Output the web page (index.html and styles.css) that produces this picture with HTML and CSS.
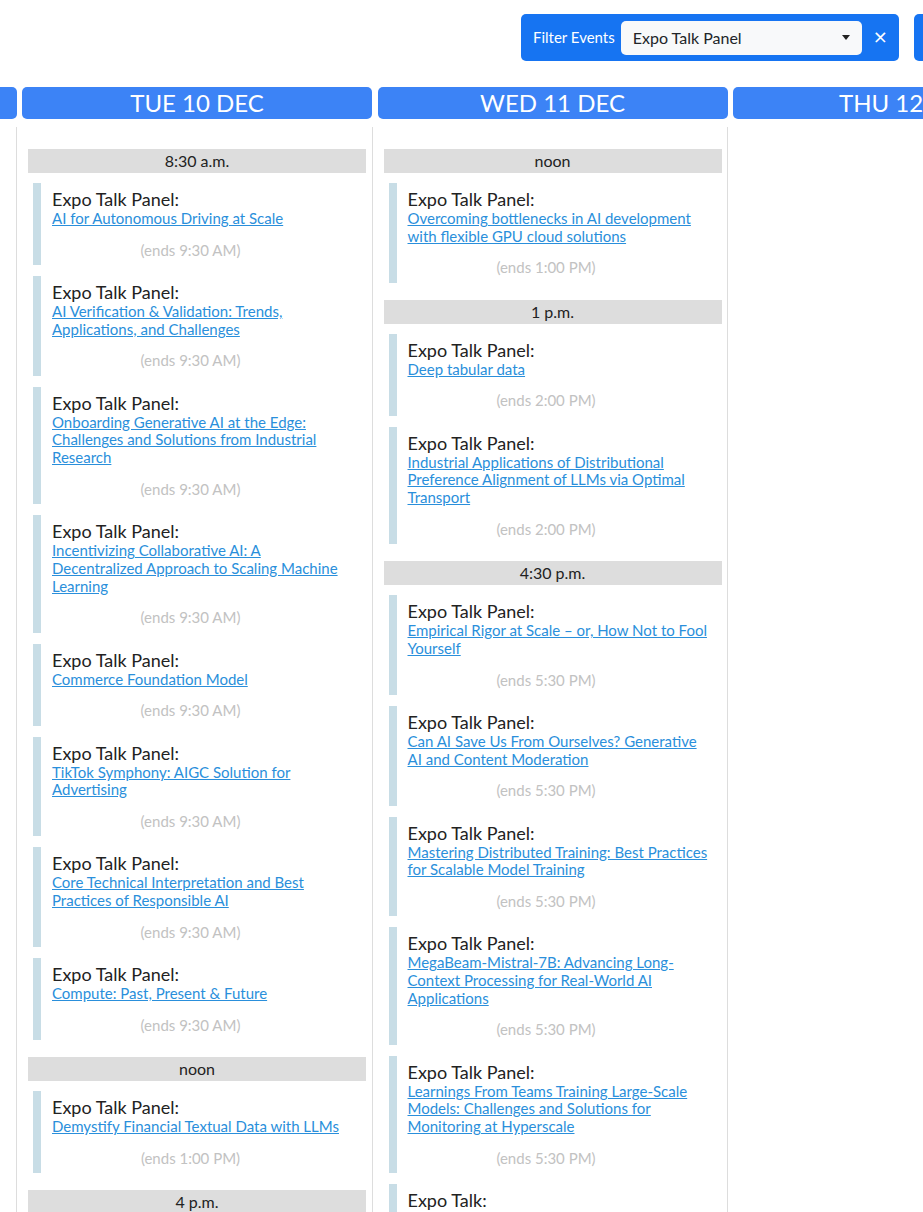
FILE: index.html
```html
<!doctype html>
<html lang="en">
<head>
  <meta charset="UTF-8" />
  <meta name="viewport" content="width=device-width, initial-scale=1.0" />
  <title>Expo Schedule</title>
  <link rel="stylesheet" href="styles.css">
</head>
<body>
  <div class="toolbar">
    <div class="filter">
      <label class="filter-label">Filter Events</label>
      <div class="select">
        <span>Expo Talk Panel</span>
        <span class="caret"></span>
      </div>
      <button class="clear">&times;</button>
    </div>
    <div class="filter filter-next"></div>
  </div>

  <div class="days">
    <div class="day">
      <div class="day-head"></div>
      <div class="day-body"></div>
    </div>

    <div class="day">
      <div class="day-head">TUE 10 DEC</div>
      <div class="day-body">
        <div class="slot">8:30 a.m.</div>
        <div class="event">
          <div class="event-type">Expo Talk Panel:</div>
          <a href="#">AI for Autonomous Driving at Scale</a>
          <div class="ends">(ends 9:30 AM)</div>
        </div>
        <div class="event">
          <div class="event-type">Expo Talk Panel:</div>
          <a href="#">AI Verification &amp; Validation: Trends,<br>Applications, and Challenges</a>
          <div class="ends">(ends 9:30 AM)</div>
        </div>
        <div class="event">
          <div class="event-type">Expo Talk Panel:</div>
          <a href="#">Onboarding Generative AI at the Edge:<br>Challenges and Solutions from Industrial<br>Research</a>
          <div class="ends">(ends 9:30 AM)</div>
        </div>
        <div class="event">
          <div class="event-type">Expo Talk Panel:</div>
          <a href="#">Incentivizing Collaborative AI: A<br>Decentralized Approach to Scaling Machine<br>Learning</a>
          <div class="ends">(ends 9:30 AM)</div>
        </div>
        <div class="event">
          <div class="event-type">Expo Talk Panel:</div>
          <a href="#">Commerce Foundation Model</a>
          <div class="ends">(ends 9:30 AM)</div>
        </div>
        <div class="event">
          <div class="event-type">Expo Talk Panel:</div>
          <a href="#">TikTok Symphony: AIGC Solution for<br>Advertising</a>
          <div class="ends">(ends 9:30 AM)</div>
        </div>
        <div class="event">
          <div class="event-type">Expo Talk Panel:</div>
          <a href="#">Core Technical Interpretation and Best<br>Practices of Responsible AI</a>
          <div class="ends">(ends 9:30 AM)</div>
        </div>
        <div class="event">
          <div class="event-type">Expo Talk Panel:</div>
          <a href="#">Compute: Past, Present &amp; Future</a>
          <div class="ends">(ends 9:30 AM)</div>
        </div>
        <div class="slot">noon</div>
        <div class="event">
          <div class="event-type">Expo Talk Panel:</div>
          <a href="#">Demystify Financial Textual Data with LLMs</a>
          <div class="ends">(ends 1:00 PM)</div>
        </div>
        <div class="slot">4 p.m.</div>
      </div>
    </div>

    <div class="day">
      <div class="day-head">WED 11 DEC</div>
      <div class="day-body">
        <div class="slot">noon</div>
        <div class="event">
          <div class="event-type">Expo Talk Panel:</div>
          <a href="#">Overcoming bottlenecks in AI development<br>with flexible GPU cloud solutions</a>
          <div class="ends">(ends 1:00 PM)</div>
        </div>
        <div class="slot">1 p.m.</div>
        <div class="event">
          <div class="event-type">Expo Talk Panel:</div>
          <a href="#">Deep tabular data</a>
          <div class="ends">(ends 2:00 PM)</div>
        </div>
        <div class="event">
          <div class="event-type">Expo Talk Panel:</div>
          <a href="#">Industrial Applications of Distributional<br>Preference Alignment of LLMs via Optimal<br>Transport</a>
          <div class="ends">(ends 2:00 PM)</div>
        </div>
        <div class="slot">4:30 p.m.</div>
        <div class="event">
          <div class="event-type">Expo Talk Panel:</div>
          <a href="#">Empirical Rigor at Scale – or, How Not to Fool<br>Yourself</a>
          <div class="ends">(ends 5:30 PM)</div>
        </div>
        <div class="event">
          <div class="event-type">Expo Talk Panel:</div>
          <a href="#">Can AI Save Us From Ourselves? Generative<br>AI and Content Moderation</a>
          <div class="ends">(ends 5:30 PM)</div>
        </div>
        <div class="event">
          <div class="event-type">Expo Talk Panel:</div>
          <a href="#">Mastering Distributed Training: Best Practices<br>for Scalable Model Training</a>
          <div class="ends">(ends 5:30 PM)</div>
        </div>
        <div class="event">
          <div class="event-type">Expo Talk Panel:</div>
          <a href="#">MegaBeam-Mistral-7B: Advancing Long-<br>Context Processing for Real-World AI<br>Applications</a>
          <div class="ends">(ends 5:30 PM)</div>
        </div>
        <div class="event">
          <div class="event-type">Expo Talk Panel:</div>
          <a href="#">Learnings From Teams Training Large-Scale<br>Models: Challenges and Solutions for<br>Monitoring at Hyperscale</a>
          <div class="ends">(ends 5:30 PM)</div>
        </div>
        <div class="event">
          <div class="event-type">Expo Talk:</div>
          <a href="#">&nbsp;</a>
          <div class="ends">&nbsp;</div>
        </div>
      </div>
    </div>

    <div class="day">
      <div class="day-head">THU 12 DEC</div>
      <div class="day-body"></div>
    </div>
  </div>
</body>
</html>
```

FILE: styles.css
```css
* { box-sizing: border-box; }
body {
  margin: 0;
  overflow: hidden;
  font-family: Lato, "Open Sans", sans-serif;
  color: #222;
  background: #fff;
}

/* filter bar */
.toolbar {
  display: flex;
  justify-content: flex-end;
  gap: 15px;
  margin: 14px -62px 0 0;
}
.filter {
  display: flex;
  align-items: center;
  height: 47px;
  width: 378px;
  padding: 0 7px 0 12px;
  background: #1674f2;
  border-radius: 5px;
}
.filter-next { width: 71px; }
.filter-label {
  color: #fff;
  font-size: 15px;
  margin-right: 6px;
  padding-bottom: 1px;
}
.select {
  display: flex;
  align-items: center;
  justify-content: space-between;
  width: 241px;
  height: 34px;
  padding: 0 12px;
  background: #f8f9fa;
  border-radius: 5px;
  font-size: 16px;
  color: #212529;
}
.caret {
  width: 0; height: 0;
  border-left: 4px solid transparent;
  border-right: 4px solid transparent;
  border-top: 5px solid #222;
}
.clear {
  flex: 1;
  border: 0;
  background: none;
  color: #fff;
  font-size: 18px;
  font-family: "DejaVu Sans", sans-serif;
  padding: 0 0 2px 7px;
  cursor: pointer;
}

/* day columns */
.days {
  display: flex;
  margin: 26px 0 0 -339.5px;
}
.day { flex: none; width: 355.5px; }
.day-head {
  width: 350px;
  height: 32px;
  margin-left: 6px;
  background: #3c83f6;
  border-radius: 5px;
  color: #fff;
  font-size: 24px;
  line-height: 32px;
  text-align: center;
  white-space: nowrap;
}
.day-body {
  margin-top: 8px;
  min-height: 1200px;
  border-left: 1px solid #ddd;
  padding: 22px 5.5px 0 11px;
}
.slot {
  height: 24px;
  margin: 17px 0 10px;
  background: #ddd;
  font-size: 16px;
  line-height: 24px;
  text-align: center;
  color: #222;
}
.slot:first-child { margin-top: 0; }
.event {
  margin: 0 0 11px 5px;
  border-left: 8px solid #c8dde6;
  padding: 5px 10px 6.3px 11px;
}
.event-type {
  font-size: 18px;
  line-height: 22px;
  color: #222;
}
.event a {
  display: block;
  font-size: 15px;
  line-height: 17.7px;
  color: #2a8fdb;
  text-decoration: underline;
}
.ends {
  margin-top: 13px;
  padding-right: 27px;
  font-size: 15px;
  line-height: 18px;
  color: #c2c2c2;
  text-align: center;
}
```
